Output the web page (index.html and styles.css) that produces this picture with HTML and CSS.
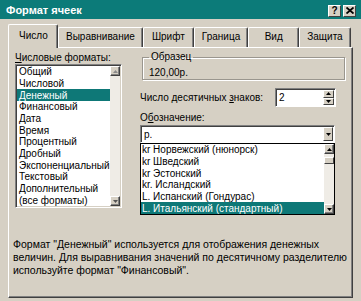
FILE: index.html
```html
<!DOCTYPE html>
<html lang="ru">
<head>
<meta charset="utf-8">
<title>Формат ячеек</title>
<link rel="stylesheet" href="styles.css">
</head>
<body>
<div class="window">
  <div class="titlebar">
    <span class="title">Формат ячеек</span>
    <div class="tb-buttons">
      <span class="tbtn q">?</span>
      <span class="tbtn"><svg width="8" height="7" viewBox="0 0 8 7"><path d="M0.5 0.5 L7.5 6.5 M7.5 0.5 L0.5 6.5" stroke="#000" stroke-width="1.8"/></svg></span>
    </div>
  </div>
  <div class="content">
    <div class="tabs">
      <div class="tab active">Число</div>
      <div class="tab">Выравнивание</div>
      <div class="tab">Шрифт</div>
      <div class="tab">Граница</div>
      <div class="tab">Вид</div>
      <div class="tab">Защита</div>
    </div>
    <div class="panel">
      <div class="cols">
        <div class="left">
          <div class="label"><u>Ч</u>исловые форматы:</div>
          <div class="listbox">
            <div class="items">
              <div class="item">Общий</div>
              <div class="item">Числовой</div>
              <div class="item sel">Денежный</div>
              <div class="item">Финансовый</div>
              <div class="item">Дата</div>
              <div class="item">Время</div>
              <div class="item">Процентный</div>
              <div class="item">Дробный</div>
              <div class="item">Экспоненциальный</div>
              <div class="item">Текстовый</div>
              <div class="item">Дополнительный</div>
              <div class="item">(все форматы)</div>
            </div>
            <div class="vscroll">
              <span class="sbtn"><svg width="5" height="3" viewBox="0 0 5 3"><path d="M2.5 0 L5 3 L0 3Z" fill="#8a8a8a"/></svg></span>
              <span class="track"></span>
              <span class="sbtn"><svg width="5" height="3" viewBox="0 0 5 3"><path d="M0 0 L5 0 L2.5 3Z" fill="#555"/></svg></span>
            </div>
          </div>
        </div>
        <div class="right">
          <fieldset class="group">
            <legend>Образец</legend>
            <div class="sample">120,00р.</div>
          </fieldset>
          <div class="spin-row">
            <span class="spin-label">Число десятичных <u>з</u>наков:</span>
            <div class="spin">
              <span class="spin-val">2</span>
              <div class="spin-btns">
                <span class="spbtn"><svg width="5" height="3" viewBox="0 0 5 3"><path d="M2.5 0 L5 3 L0 3Z" fill="#000"/></svg></span>
                <span class="spbtn"><svg width="5" height="3" viewBox="0 0 5 3"><path d="M0 0 L5 0 L2.5 3Z" fill="#000"/></svg></span>
              </div>
            </div>
          </div>
          <div class="label sym-label">О<u>б</u>означение:</div>
          <div class="combo">
            <span class="combo-val">р.</span>
            <span class="dbtn"><svg width="5" height="3" viewBox="0 0 5 3"><path d="M0 0 L5 0 L2.5 3Z" fill="#000"/></svg></span>
          </div>
          <div class="dropdown">
            <div class="items">
              <div class="ditem">kr Норвежский (нюнорск)</div>
              <div class="ditem">kr Шведский</div>
              <div class="ditem">kr Эстонский</div>
              <div class="ditem">kr. Исландский</div>
              <div class="ditem">L. Испанский (Гондурас)</div>
              <div class="ditem sel">L. Итальянский (стандартный)</div>
            </div>
            <div class="vscroll">
              <span class="sbtn"><svg width="5" height="3" viewBox="0 0 5 3"><path d="M2.5 0 L5 3 L0 3Z" fill="#000"/></svg></span>
              <span class="track">
                <span class="thumb"></span>
              </span>
              <span class="sbtn"><svg width="5" height="3" viewBox="0 0 5 3"><path d="M0 0 L5 0 L2.5 3Z" fill="#000"/></svg></span>
            </div>
          </div>
        </div>
      </div>
      <p class="desc">Формат "Денежный" используется для отображения денежных<br>величин. Для выравнивания значений по десятичному разделителю<br>используйте формат "Финансовый".</p>
    </div>
  </div>
</div>
</body>
</html>
```

FILE: styles.css
```css
* { box-sizing: border-box; }

body {
  margin: 0;
  width: 361px;
  height: 301px;
  overflow: hidden;
  background: #d6d0c4;
  font-family: "Liberation Sans", Arial, sans-serif;
  font-size: 10px;
  color: #000;
}

.titlebar {
  height: 19px;
  background: #0c7b79;
  display: flex;
  align-items: center;
  justify-content: space-between;
  padding: 0 5px 0 6px;
}

.title {
  color: #fff;
  font-weight: bold;
  font-size: 11px;
}

.tb-buttons {
  display: flex;
  gap: 2px;
  margin-top: 2px;
}

.tbtn {
  width: 13px;
  height: 12px;
  background: #d6d0c4;
  border: 1px solid;
  border-color: #fff #404040 #404040 #fff;
  display: flex;
  align-items: center;
  justify-content: center;
  font-weight: bold;
  font-size: 10px;
  line-height: 1;
}

.content {
  padding: 5px 8px 0 8px;
}

.tabs {
  display: flex;
  align-items: flex-end;
  height: 23px;
  position: relative;
  z-index: 1;
}

.tab {
  height: 20px;
  min-width: 51px;
  padding: 0 7px 2px 7px;
  display: flex;
  align-items: center;
  justify-content: center;
  border-top: 1px solid #fff;
  border-left: 1px solid #fff;
  border-right: 1px solid #404040;
  border-radius: 2px 2px 0 0;
  box-shadow: inset -1px 0 0 #808080;
  background: #d6d0c4;
}

.tab.active {
  height: 24px;
  min-width: 50px;
  margin-bottom: -1px;
  padding: 0 5px 2px 6px;
}

.panel {
  height: 251px;
  border-top: 1px solid #fff;
  border-left: 1px solid #fff;
  border-right: 1px solid #404040;
  border-bottom: 1px solid #404040;
  box-shadow: inset -1px -1px 0 #808080;
  padding: 4px 6px 0 4px;
}

.cols {
  display: flex;
  gap: 18px;
  padding-left: 2px;
}

.left {
  width: 107px;
}

.label {
  height: 12px;
  line-height: 12px;
  white-space: nowrap;
}

.listbox {
  height: 144px;
  width: 107px;
  background: #fff;
  border: 1px solid;
  border-color: #808080 #fff #fff #808080;
  box-shadow: inset 1px 1px 0 #404040, inset -1px -1px 0 #d6d0c4;
  padding: 1px;
  display: flex;
}

.items {
  flex: 1;
  display: flex;
  flex-direction: column;
  min-width: 0;
}

.item {
  flex: 1;
  padding-left: 2px;
  display: flex;
  align-items: center;
  white-space: nowrap;
}

.sel {
  background: #0e7877;
  color: #fff;
}

.vscroll {
  width: 10px;
  display: flex;
  flex-direction: column;
  background: #efece6;
}

.sbtn {
  height: 10px;
  background: #d6d0c4;
  border: 1px solid;
  border-color: #fff #404040 #404040 #fff;
  box-shadow: inset -1px -1px 0 #808080;
  display: flex;
  align-items: center;
  justify-content: center;
}

.track {
  flex: 1;
  display: flex;
  flex-direction: column;
  padding-top: 3px;
}

.thumb {
  height: 7px;
  background: #d6d0c4;
  border: 1px solid;
  border-color: #fff #404040 #404040 #fff;
}

.right {
  width: 205px;
}

.group {
  margin: 0 0 0 2px;
  height: 28px;
  padding: 1px 6px 0 6px;
  border: 1px solid #9a968e;
  box-shadow: inset 1px 1px 0 #fff, 1px 1px 0 #fff;
}

.group legend {
  padding: 0 2px;
  margin-left: 0;
  line-height: 10px;
}

.sample {
  line-height: 12px;
  padding-top: 4px;
}

.spin-row {
  margin-top: 8px;
  height: 19px;
  display: flex;
  align-items: center;
}

.spin-label {
  flex: 0 0 135px;
  white-space: nowrap;
}

.spin {
  width: 61px;
  height: 19px;
  background: #fff;
  border: 1px solid;
  border-color: #808080 #fff #fff #808080;
  box-shadow: inset 1px 1px 0 #404040;
  display: flex;
  padding: 1px 1px 1px 3px;
}

.spin-val {
  flex: 1;
  line-height: 15px;
}

.spin-btns {
  width: 11px;
  display: flex;
  flex-direction: column;
}

.spbtn {
  flex: 1;
  background: #d6d0c4;
  border: 1px solid;
  border-color: #fff #404040 #404040 #fff;
  display: flex;
  align-items: center;
  justify-content: center;
}

.sym-label {
  margin-top: 5px;
}

.combo {
  margin-top: 1px;
  width: 195px;
  height: 18px;
  background: #fff;
  border: 1px solid;
  border-color: #808080 #fff #fff #808080;
  box-shadow: inset 1px 1px 0 #404040;
  display: flex;
  padding: 1px 1px 1px 3px;
}

.combo-val {
  flex: 1;
  line-height: 15px;
}

.dbtn {
  width: 10px;
  background: #d6d0c4;
  border: 1px solid;
  border-color: #fff #404040 #404040 #fff;
  display: flex;
  align-items: center;
  justify-content: center;
}

.dropdown {
  width: 195px;
  height: 72px;
  background: #fff;
  border: 1px solid #000;
  display: flex;
}

.ditem {
  flex: 1;
  padding-left: 1px;
  display: flex;
  align-items: center;
  white-space: nowrap;
}

.desc {
  margin: 23px 0 0 0;
  line-height: 13px;
  white-space: nowrap;
  font-size: 10.5px;
}
```
